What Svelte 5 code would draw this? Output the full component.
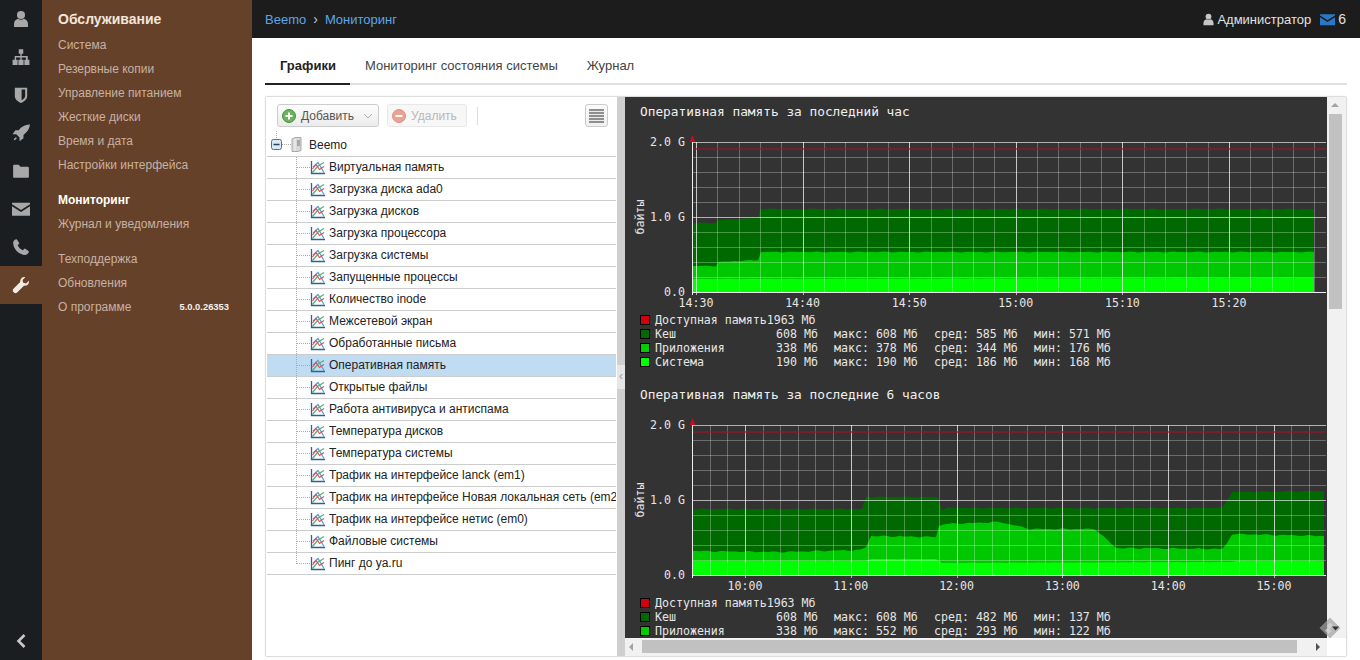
<script>
  const railIcons = [
    { name: 'user', d: 'M8 .8a3.600 3.600 0 1 1 0 7.200A3.600 3.600 0 0 1 8 .8zM1.800 15v-2.600C1.800 10 3.500 8.300 5.300 7.800c1.500 1.200 3.900 1.200 5.400 0 1.800.5 3.500 2.200 3.500 4.600V15z' },
    { name: 'sitemap', d: 'M6 1h4v4H8.600v2.200H14V10.500h1.500V15h-4.500v-4.500h1.400V8.400H8.600v2.100H10.300V15H5.700v-4.500h1.700V8.400H3.600v2.100H5V15H.5v-4.500H2.400V7.200h5V5H6z' },
    { name: 'shield', d: 'M2.500 1.500h11v7.300c0 2.900-2.700 4.900-5.500 6.200-2.800-1.300-5.500-3.300-5.500-6.200zM8.500 3v9.600c1.500-.9 3.200-2.200 3.200-3.800V3z' },
    { name: 'rocket', d: 'M15.500.5c-4.200.2-7.300 2-9.500 5H3L.5 9h3.300l2.900 2.900v3.400l3.500-2.600v-2.900c3.100-2.300 5.300-5.300 5.800-9.300zM1.500 14.500c.3-1.500 1-2.500 2-2.800l.8.800c-.3 1-1.300 1.700-2.800 2z' },
    { name: 'folder', d: 'M2 2.500h4l1.500 1.800H14a1 1 0 0 1 1 1V13a1 1 0 0 1-1 1H2a1 1 0 0 1-1-1V3.500a1 1 0 0 1 1-1z' },
    { name: 'mail', d: 'M0 2.500h16v1.300L8 8.800 0 3.800zM0 5.600l8 5 8-5V14H0z' },
    { name: 'phone', d: 'M4.200 1l2.400 3.600-1.500 1.900c.8 2 2.400 3.600 4.400 4.400l1.900-1.500 3.600 2.400c0 1.700-1.500 3.200-3.200 3.200C6.300 15 1 9.700 1 4.200 1 2.500 2.500 1 4.200 1z' }
  ];
  const wrench = 'M15 4.200l-2.500 2.400-2.600-.5-.5-2.600L11.800 1C9.300.4 6.900 2.600 7.300 5.400L1.500 11.200a2.300 2.300 0 0 0 3.300 3.300l5.800-5.800C13.400 9.100 15.600 6.700 15 4.200z';

  const navGroups = [
    ['Система', 'Резервные копии', 'Управление питанием', 'Жесткие диски', 'Время и дата', 'Настройки интерфейса'],
  ];

  const treeItems = [
    'Виртуальная память', 'Загрузка диска ada0', 'Загрузка дисков', 'Загрузка процессора', 'Загрузка системы',
    'Запущенные процессы', 'Количество inode', 'Межсетевой экран', 'Обработанные письма', 'Оперативная память',
    'Открытые файлы', 'Работа антивируса и антиспама', 'Температура дисков', 'Температура системы',
    'Трафик на интерфейсе lanck (em1)', 'Трафик на интерфейсе Новая локальная сеть (em2)', 'Трафик на интерфейсе нетис (em0)',
    'Файловые системы', 'Пинг до ya.ru'
  ];

  function range(start, end, step) {
    const out = [];
    for (let v = start; v <= end; v += step) out.push(v);
    return out;
  }

  function wobble(points, seed, amp) {
    // resample the outline every 4px and add a small steady noise, as measured data has
    const out = [];
    for (let i = 0; i < points.length - 1; i++) {
      const [x0, y0] = points[i];
      const [x1, y1] = points[i + 1];
      const n = Math.max(1, Math.round((x1 - x0) / 4));
      for (let k = 0; k < n; k++) {
        const x = x0 + ((x1 - x0) * k) / n;
        const y = y0 + ((y1 - y0) * k) / n;
        out.push([x, y + Math.sin(x * 0.37 + seed) * amp * Math.sin(x * 0.09 + seed)]);
      }
    }
    out.push(points[points.length - 1]);
    return out;
  }

  function area(points, base, seed, amp) {
    const p = wobble(points, seed, amp);
    const first = p[0][0];
    const last = p[p.length - 1][0];
    return `${first},${base} ` + p.map(([x, y]) => `${x.toFixed(1)},${y.toFixed(1)}`).join(' ') + ` ${last},${base}`;
  }

  function local(points, top) {
    return points.map(([x, y]) => [x - 625, y - top]);
  }

  const legendOne = [
    { color: '#006a00', name: 'Кеш', cur: '608 Мб', max: '608 Мб', avg: '585 Мб', min: '571 Мб' },
    { color: '#00cc00', name: 'Приложения', cur: '338 Мб', max: '378 Мб', avg: '344 Мб', min: '176 Мб' },
    { color: '#00ff00', name: 'Система', cur: '190 Мб', max: '190 Мб', avg: '186 Мб', min: '168 Мб' }
  ];
  const legendTwo = [
    { color: '#006a00', name: 'Кеш', cur: '608 Мб', max: '608 Мб', avg: '482 Мб', min: '137 Мб' },
    { color: '#00cc00', name: 'Приложения', cur: '338 Мб', max: '552 Мб', avg: '293 Мб', min: '122 Мб' }
  ];

  const charts = [
    {
      title: 'Оперативная память за последний час',
      legend: legendOne,
      majors: range(71, 701, 106.6),
      minors: range(71 - 0, 701, 21.32),
      labels: ['14:30', '14:40', '14:50', '15:00', '15:10', '15:20'],
      layers: [
        { fill: '#006a00', pts: local([[692, 223], [716, 223], [718, 220], [758, 218], [760, 209], [1314, 209]], 127), amp: 0.5 },
        { fill: '#00c800', pts: local([[692, 266], [716, 266], [718, 262], [758, 260], [761, 252], [1314, 252]], 127), amp: 0.5 },
        { fill: '#00ff00', pts: local([[692, 279], [1314, 278]], 127), amp: 0.2 }
      ]
    },
    {
      title: 'Оперативная память за последние 6 часов',
      legend: legendTwo,
      majors: range(120, 701, 105.8),
      minors: range(84.7, 701, 17.63),
      labels: ['10:00', '11:00', '12:00', '13:00', '14:00', '15:00'],
      layers: [
        { fill: '#006a00', pts: local([[692, 509], [862, 509], [866, 497], [938, 497], [942, 510], [948, 508], [1222, 508], [1232, 492], [1324, 491]], 410), amp: 0.7 },
        { fill: '#00c800', pts: local([[692, 551], [780, 552], [860, 550], [866, 547], [871, 536], [936, 537], [939, 526], [945, 524], [1000, 522], [1030, 529], [1095, 529], [1116, 548], [1222, 549], [1226, 545], [1232, 534], [1324, 536]], 410), amp: 0.8 },
        { fill: '#00ff00', pts: local([[692, 561], [865, 561], [870, 559], [936, 559], [942, 563], [1232, 562], [1236, 561], [1324, 561]], 410), amp: 0.2 }
      ]
    }
  ];
  const hlines = range(15, 165, 15);
</script>

<div class="page">
  <nav class="rail">
    {#each railIcons as icon}
      <div class="rail-item">
        <svg class="rail-icon" viewBox="0 0 16 16" aria-label={icon.name}><path d={icon.d} fill-rule="evenodd" /></svg>
      </div>
    {/each}
    <div class="rail-item active">
      <svg class="rail-icon" viewBox="0 0 16 16"><path d={wrench} /></svg>
    </div>
    <div class="rail-spacer"></div>
    <div class="rail-back">
      <svg viewBox="0 0 12 16" class="back-icon"><path d="M9.500 2 3.500 8l6 6" /></svg>
    </div>
  </nav>

  <aside class="sidebar">
    <h2 class="side-title">Обслуживание</h2>
    {#each navGroups[0] as item}
      <div class="side-link">{item}</div>
    {/each}
    <div class="side-link strong gap">Мониторинг</div>
    <div class="side-link">Журнал и уведомления</div>
    <div class="side-link gap">Техподдержка</div>
    <div class="side-link">Обновления</div>
    <div class="side-link version-row"><span>О программе</span><span class="version">5.0.0.26353</span></div>
  </aside>

  <div class="main">
    <header class="topbar">
      <div class="crumbs">
        <span>Beemo</span>
        <span class="crumb-sep">›</span>
        <span>Мониторинг</span>
      </div>
      <div class="account">
        <svg class="top-user" viewBox="0 0 16 16"><path d={railIcons[0].d} /></svg>
        <span class="account-name">Администратор</span>
        <svg class="top-mail" viewBox="0 0 16 16"><path d={railIcons[5].d} /></svg>
        <span class="count">6</span>
      </div>
    </header>

    <div class="content">
      <div class="tabs">
        <div class="tab active">Графики</div>
        <div class="tab">Мониторинг состояния системы</div>
        <div class="tab">Журнал</div>
      </div>

      <section class="panel">
        <div class="tree-pane">
          <div class="toolbar">
            <button class="btn">
              <svg class="btn-icon" viewBox="0 0 14 14"><circle cx="7" cy="7" r="6.500" fill="#6cb35c" stroke="#4d8f40" /><path d="M3.500 7h7M7 3.500v7" stroke="#fff" stroke-width="2" /></svg>
              <span>Добавить</span>
              <svg class="btn-caret" viewBox="0 0 10 6"><path d="M1 1l4 4 4-4" /></svg>
            </button>
            <button class="btn disabled">
              <svg class="btn-icon" viewBox="0 0 14 14"><circle cx="7" cy="7" r="6.500" fill="#eda193" stroke="#dd9284" /><path d="M3.500 7h7" stroke="#fff" stroke-width="2" /></svg>
              <span>Удалить</span>
            </button>
            <span class="tool-sep"></span>
            <button class="btn menu-btn" aria-label="Меню">
              <span class="menu-lines"></span>
            </button>
          </div>

          <div class="tree">
            <div class="root-row">
              <svg class="expander" viewBox="0 0 11 11"><rect x=".5" y=".5" width="10" height="10" rx="2" fill="#dce8f2" stroke="#4f6f88" /><path d="M2.500 5.500h6" stroke="#24445c" stroke-width="1.500" /></svg>
              <svg class="server" viewBox="0 0 11 15"><path d="M1 2 4 .5h6v13L7 14.500H1z" fill="#d8d8d8" stroke="#a9a9a9" /><path d="M4 2v12" stroke="#f4f4f4" /><path d="M6 4h3M6 6h3M6 8h3" stroke="#777" /></svg>
              <span>Beemo</span>
            </div>
            {#each treeItems as item, i}
              <div class="tree-row" class:selected={i === 9} class:last={i === treeItems.length - 1}>
                <svg class="graph" viewBox="0 0 15 15">
                  <path d="M3 7 8 2.500l6 10" fill="none" stroke="#4f9fd0" stroke-width="1.200" />
                  <path d="M2.500 12.500 8 6l6-3.500" fill="none" stroke="#58b070" stroke-width="1.200" />
                  <path d="M2.500 9 6 4.500l3.500 5 4.500-3" fill="none" stroke="#d9505c" stroke-width="1.200" />
                  <path d="M1.500 1v12.500H15" fill="none" stroke="#2f5f9f" stroke-width="1.300" />
                </svg>
                <span class="tree-label">{item}</span>
              </div>
            {/each}
          </div>
        </div>

        <div class="splitter"><span class="split-handle">‹</span></div>

        <div class="charts">
          {#each charts as chart}
            <article class="chart">
              <h3 class="chart-title">{chart.title}</h3>
              <svg class="plot" width="702" height="185" viewBox="0 0 702 185">
                {#each chart.layers as layer, i}
                  <polygon points={area(layer.pts, 165, i * 2 + 1, layer.amp)} fill={layer.fill} />
                {/each}
                {#each hlines as y}
                  <line x1="67" x2="701" y1={y + 0.5} y2={y + 0.5} class={y === 15 || y === 90 || y === 165 ? 'major' : 'minor'} />
                {/each}
                {#each chart.minors as x}
                  <line x1={Math.round(x) + 0.5} x2={Math.round(x) + 0.5} y1="15" y2="165" class="minor" />
                {/each}
                {#each chart.majors as x}
                  <line x1={Math.round(x) + 0.5} x2={Math.round(x) + 0.5} y1="15" y2="168" class="major" />
                {/each}
                <line x1="67" x2="701" y1="22" y2="22" class="limit" />
                <line x1="67.500" x2="67.500" y1="13" y2="168" class="axis" />
                <line x1="67" x2="701" y1="165.500" y2="165.500" class="axis" />
                <path d="M67.500 8l3 7h-6z" fill="#c01020" />
                <text x="60" y="19" class="tick" text-anchor="end">2.0 G</text>
                <text x="60" y="94" class="tick" text-anchor="end">1.0 G</text>
                <text x="60" y="169" class="tick" text-anchor="end">0.0</text>
                <text class="tick" text-anchor="middle" transform="translate(19 90) rotate(-90)">байты</text>
                {#each chart.labels as label, i}
                  <text x={chart.majors[i]} y="180" class="tick" text-anchor="middle">{label}</text>
                {/each}
              </svg>
              <div class="legend">
                <div class="legend-row">
                  <span class="swatch swatch-limit"></span>
                  <span class="legend-wide">Доступная память1963 Мб</span>
                </div>
                {#each chart.legend as row}
                  <div class="legend-row">
                    <span class="swatch" style="background:{row.color}"></span>
                    <span class="col-name">{row.name}</span>
                    <span class="col-cur">{row.cur}</span>
                    <span class="col-stat">макс: {row.max}</span>
                    <span class="col-stat">сред: {row.avg}</span>
                    <span class="col-stat">мин: {row.min}</span>
                  </div>
                {/each}
              </div>
            </article>
          {/each}
        </div>

        <div class="vscroll">
          <span class="arrow up"></span>
          <span class="vthumb"></span>
        </div>

        <div class="hscroll">
          <span class="arrow left"></span>
          <span class="hthumb"></span>
          <span class="arrow right"></span>
        </div>
        <div class="corner"></div>

        <svg class="watermark" viewBox="0 0 22 22">
          <path d="M11 .5 21.500 11 11 21.500.5 11z" fill="#a0a0a0" opacity=".7" />
          <path d="M7.500 9 11 5.500l3 3-3.500 3.500 2 2-3 3-3.500-3.500 3-3z" fill="#d8d8d8" opacity=".75" />
          <path d="M13 9.500h7l-3.500 4z" fill="#333" />
        </svg>
      </section>
    </div>
  </div>
</div>

<style>
  :global(body) {
    margin: 0;
    background: #fff;
  }
  .page {
    display: flex;
    width: 1360px;
    height: 660px;
    overflow: hidden;
    font-family: "Liberation Sans", Arial, sans-serif;
  }

  /* icon rail */
  .rail {
    width: 42px;
    flex: none;
    display: flex;
    flex-direction: column;
    background: #1b1e21;
  }
  .rail-item {
    height: 38px;
    flex: none;
    display: flex;
    align-items: center;
    justify-content: center;
  }
  .rail-item.active {
    background: #65412a;
  }
  .rail-item.active .rail-icon {
    fill: #f3ebe2;
  }
  .rail-icon {
    width: 18px;
    height: 18px;
    fill: #a8a8a8;
  }
  .rail-spacer {
    flex: 1;
  }
  .rail-back {
    height: 38px;
    display: flex;
    align-items: center;
    justify-content: center;
  }
  .back-icon {
    width: 12px;
    height: 16px;
    fill: none;
    stroke: #c8c8c8;
    stroke-width: 2.600;
  }

  /* sidebar */
  .sidebar {
    width: 210px;
    flex: none;
    box-sizing: border-box;
    padding: 9px 23px 0 16px;
    background: #65412a;
    color: #c6b1a3;
    font-size: 12px;
  }
  .side-title {
    margin: 0 0 4px;
    height: 20px;
    line-height: 20px;
    font-size: 14px;
    font-weight: 700;
    color: #f3e6da;
  }
  .side-link {
    height: 24px;
    line-height: 24px;
  }
  .side-link.gap {
    margin-top: 11px;
  }
  .side-link.strong {
    font-weight: 700;
    color: #fff;
  }
  .version-row {
    display: flex;
    justify-content: space-between;
  }
  .version {
    font-size: 9.400px;
    font-weight: 700;
    color: #f5f0ea;
  }

  /* main column */
  .main {
    flex: 1;
    min-width: 0;
    display: flex;
    flex-direction: column;
  }
  .topbar {
    height: 38px;
    flex: none;
    box-sizing: border-box;
    padding: 0 14px 0 13px;
    display: flex;
    align-items: center;
    justify-content: space-between;
    background: #1c1c1c;
    font-size: 13px;
  }
  .crumbs {
    display: flex;
    align-items: center;
    gap: 7px;
    color: #5aa7e8;
  }
  .crumb-sep {
    color: #c8c8c8;
    font-size: 14px;
  }
  .account {
    display: flex;
    align-items: center;
    color: #e2e2e2;
  }
  .top-user {
    width: 13px;
    height: 13px;
    fill: #c6c6c6;
    margin-right: 2px;
  }
  .top-mail {
    width: 15px;
    height: 15px;
    fill: #2a78c5;
    margin: 0 3px 0 9px;
  }
  .count {
    font-size: 14px;
  }
  .content {
    flex: 1;
    min-height: 0;
    padding: 0 13px;
    display: flex;
    flex-direction: column;
  }

  /* tabs */
  .tabs {
    height: 47px;
    flex: none;
    box-sizing: border-box;
    display: flex;
    border-bottom: 2px solid #e0e0e0;
    font-size: 13px;
    color: #444;
  }
  .tab {
    padding: 0 14.500px;
    height: 47px;
    box-sizing: border-box;
    line-height: 56px;
  }
  .tab.active {
    padding-left: 15px;
    font-weight: 700;
    color: #222;
    border-bottom: 2px solid #222;
  }

  /* panel */
  .panel {
    position: relative;
    margin-top: 11px;
    height: 561px;
    flex: none;
    box-sizing: border-box;
    border: 1px solid #ddd;
    border-radius: 2px;
    box-shadow: 0 0 2px rgba(0, 0, 0, 0.08);
    display: grid;
    grid-template-columns: 351px 8px 702px 19px;
    grid-template-rows: 541px 18px;
  }
  .tree-pane {
    grid-row: 1 / 3;
    overflow: hidden;
    background: #fff;
  }
  .toolbar {
    height: 38px;
    box-sizing: border-box;
    padding: 7px 9px 0 11px;
    display: flex;
    align-items: flex-start;
  }
  .btn {
    height: 23px;
    box-sizing: border-box;
    display: flex;
    align-items: center;
    gap: 5px;
    padding: 0 5px 0 4px;
    border: 1px solid #ccc;
    border-radius: 3px;
    background: linear-gradient(#fdfdfd, #ececec);
    font: 12px "Liberation Sans", Arial, sans-serif;
    color: #555;
  }
  .btn-icon {
    width: 14px;
    height: 14px;
  }
  .btn-caret {
    width: 10px;
    height: 6px;
    margin-left: 4px;
    fill: none;
    stroke: #aaa;
  }
  .btn.disabled {
    margin-left: 8px;
    padding-right: 8px;
    padding-left: 4px;
    width: 80px;
    background: #f7f7f7;
    border-color: #e8e8e8;
    color: #b8b8b8;
  }
  .tool-sep {
    width: 1px;
    height: 18px;
    margin: 3px 0 0 10px;
    background: #ddd;
  }
  .menu-btn {
    margin-left: auto;
    width: 23px;
    padding: 0;
    justify-content: center;
    background: linear-gradient(#fafafa, #f0f0f0);
  }
  .menu-lines {
    display: block;
    width: 15px;
    height: 14px;
    background: repeating-linear-gradient(#8f8f8f 0 2px, #ececec 2px 3px);
  }
  .tree {
    position: relative;
    margin: 0 1px;
    font-size: 12px;
    color: #222;
  }
  .root-row {
    position: relative;
    height: 22px;
    box-sizing: border-box;
    display: flex;
    align-items: center;
    padding: 0 0 2px 4px;
    border-bottom: 1px solid #ccc;
  }
  .root-row::before {
    content: "";
    position: absolute;
    left: 9px;
    top: -4px;
    height: 7px;
    border-left: 1px dotted #aaa;
  }
  .root-row::after {
    content: "";
    position: absolute;
    left: 15px;
    width: 9px;
    top: 9px;
    border-top: 1px dotted #aaa;
  }
  .expander {
    width: 11px;
    height: 11px;
    position: relative;
    z-index: 1;
  }
  .server {
    width: 11px;
    height: 15px;
    margin-left: 9px;
    margin-right: 7px;
  }
  .tree-row {
    position: relative;
    height: 22px;
    box-sizing: border-box;
    display: flex;
    align-items: center;
    padding: 0 0 1px 43px;
    border-bottom: 1px solid #ccc;
    white-space: nowrap;
    overflow: hidden;
  }
  .tree-row::before {
    content: "";
    position: absolute;
    left: 29px;
    top: 0;
    bottom: 0;
    border-left: 1px dotted #aaa;
  }
  .tree-row.last::before {
    bottom: 10px;
  }
  .tree-row::after {
    content: "";
    position: absolute;
    left: 30px;
    width: 13px;
    top: 10px;
    border-top: 1px dotted #aaa;
  }
  .tree-row.selected {
    background: #bfdcf2;
  }
  .graph {
    width: 15px;
    height: 15px;
    flex: none;
    margin-right: 4px;
  }
  .tree-label {
    flex: none;
  }
  .splitter {
    grid-row: 1 / 3;
    position: relative;
    background: #cfcfcf;
    display: flex;
    align-items: center;
    justify-content: center;
  }
  .split-handle {
    margin-top: 0;
    height: 24px;
    width: 8px;
    line-height: 22px;
    text-align: center;
    font-size: 12px;
    background: #e6e6e6;
    color: #999;
  }

  /* charts */
  .charts {
    overflow: hidden;
    background: #333;
    color: #e6e6e6;
    font-family: "DejaVu Sans Mono", "Liberation Mono", monospace;
  }
  .chart {
    height: 283px;
    flex: none;
  }
  .chart-title {
    margin: 0;
    height: 30px;
    padding-left: 15px;
    line-height: 30px;
    font-size: 12.800px;
    font-weight: 400;
    white-space: pre;
    color: #f0f0f0;
  }
  .plot {
    display: block;
  }
  .plot line.minor {
    stroke: #fff;
    stroke-opacity: 0.28;
    stroke-width: 1;
  }
  .plot line.major {
    stroke: #fff;
    stroke-opacity: 0.62;
    stroke-width: 1;
  }
  .plot line.limit {
    stroke: #a5122a;
    stroke-opacity: 0.8;
    stroke-width: 1.500;
  }
  .plot line.axis {
    stroke: #eee;
    stroke-width: 1;
  }
  .tick {
    font-size: 11.600px;
    fill: #e6e6e6;
  }
  .legend {
    font-size: 11.600px;
    padding: 1px 0 0 15px;
  }
  .legend-row {
    height: 14px;
    line-height: 14px;
    display: flex;
    align-items: center;
    white-space: pre;
  }
  .swatch {
    width: 8px;
    height: 8px;
    flex: none;
    margin-right: 5px;
    border: 1px solid #000;
  }
  .swatch-limit {
    background: #d00010;
  }
  .col-name {
    width: 121px;
    flex: none;
  }
  .col-cur {
    width: 58px;
    flex: none;
  }
  .col-stat {
    width: 100px;
    flex: none;
  }

  /* scrollbars */
  .vscroll {
    position: relative;
    background: #f1f1f1;
  }
  .vthumb {
    position: absolute;
    left: 2px;
    right: 4px;
    top: 17px;
    height: 195px;
    background: #c1c1c1;
  }
  .hscroll {
    grid-column: 3;
    position: relative;
    background: #f1f1f1;
  }
  .hthumb {
    position: absolute;
    left: 17px;
    top: 2px;
    bottom: 3px;
    width: 655px;
    background: #c1c1c1;
  }
  .corner {
    background: #fff;
  }
  .arrow {
    position: absolute;
    width: 0;
    height: 0;
    border-style: solid;
    border-color: transparent;
  }
  .arrow.up {
    left: 4px;
    top: 6px;
    border-width: 0 4px 4px;
    border-bottom-color: #a3a3a3;
  }
  .arrow.left {
    left: 4px;
    top: 5px;
    border-width: 4px 4px 4px 0;
    border-right-color: #a3a3a3;
  }
  .arrow.right {
    left: 691px;
    top: 5px;
    border-width: 4px 0 4px 4px;
    border-left-color: #505050;
  }
  .watermark {
    position: absolute;
    left: 1053px;
    top: 520px;
    width: 22px;
    height: 22px;
  }
</style>
